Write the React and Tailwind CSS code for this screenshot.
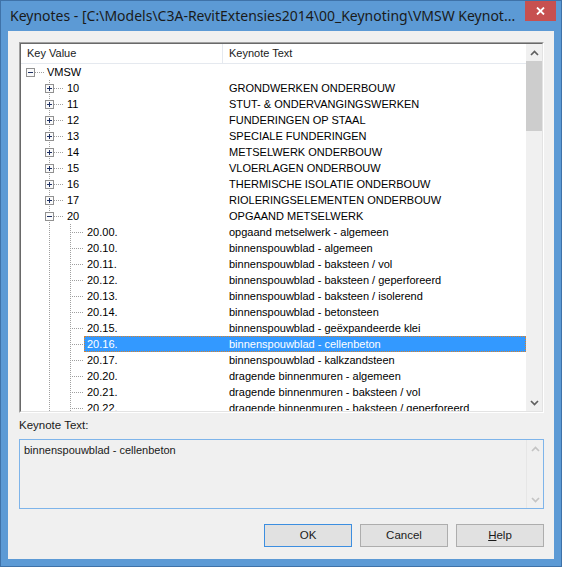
import React from "react";

const rows = [
  { d: 0, k: "VMSW", t: "", box: "minus" },
  { d: 1, k: "10", t: "GRONDWERKEN ONDERBOUW", box: "plus" },
  { d: 1, k: "11", t: "STUT- & ONDERVANGINGSWERKEN", box: "plus" },
  { d: 1, k: "12", t: "FUNDERINGEN OP STAAL", box: "plus" },
  { d: 1, k: "13", t: "SPECIALE FUNDERINGEN", box: "plus" },
  { d: 1, k: "14", t: "METSELWERK ONDERBOUW", box: "plus" },
  { d: 1, k: "15", t: "VLOERLAGEN ONDERBOUW", box: "plus" },
  { d: 1, k: "16", t: "THERMISCHE ISOLATIE ONDERBOUW", box: "plus" },
  { d: 1, k: "17", t: "RIOLERINGSELEMENTEN ONDERBOUW", box: "plus" },
  { d: 1, k: "20", t: "OPGAAND METSELWERK", box: "minus" },
  { d: 2, k: "20.00.", t: "opgaand metselwerk - algemeen" },
  { d: 2, k: "20.10.", t: "binnenspouwblad - algemeen" },
  { d: 2, k: "20.11.", t: "binnenspouwblad - baksteen / vol" },
  { d: 2, k: "20.12.", t: "binnenspouwblad - baksteen / geperforeerd" },
  { d: 2, k: "20.13.", t: "binnenspouwblad - baksteen / isolerend" },
  { d: 2, k: "20.14.", t: "binnenspouwblad - betonsteen" },
  { d: 2, k: "20.15.", t: "binnenspouwblad - geëxpandeerde klei" },
  { d: 2, k: "20.16.", t: "binnenspouwblad - cellenbeton", sel: true },
  { d: 2, k: "20.17.", t: "binnenspouwblad - kalkzandsteen" },
  { d: 2, k: "20.20.", t: "dragende binnenmuren - algemeen" },
  { d: 2, k: "20.21.", t: "dragende binnenmuren - baksteen / vol" },
  { d: 2, k: "20.22.", t: "dragende binnenmuren - baksteen / geperforeerd" },
];

const svgW = { 0: 23, 1: 43, 2: 63 };
const svgCls = { 0: "w-[23px]", 1: "w-[43px]", 2: "w-[63px]" };
const keyCls = { 0: "w-[182px]", 1: "w-[162px]", 2: "w-[142px]" };

const DOT = "#a0a0a0";

function Box({ cx, type }) {
  return (
    <g shapeRendering="crispEdges">
      <rect x={cx - 3.5} y={4.5} width={8} height={8} fill="#fafafa" stroke="#919191" />
      <line x1={cx - 2} y1={8.5} x2={cx + 3} y2={8.5} stroke="#1d2f63" />
      {type === "plus" && <line x1={cx + 0.5} y1={6} x2={cx + 0.5} y2={11} stroke="#1d2f63" />}
    </g>
  );
}

function Lines({ d, box }) {
  const w = svgW[d];
  return (
    <svg width={w} height={16} className={`${svgCls[d]} h-[16px] shrink-0`} shapeRendering="crispEdges">
      {d === 0 && (
        <>
          <line x1={14} y1={8.5} x2={23} y2={8.5} stroke={DOT} strokeDasharray="1 1" />
          <Box cx={8.5} type={box} />
        </>
      )}
      {d === 1 && (
        <>
          <line x1={28.5} y1={0} x2={28.5} y2={16} stroke={DOT} strokeDasharray="1 1" />
          <line x1={33} y1={8.5} x2={43} y2={8.5} stroke={DOT} strokeDasharray="1 1" />
          <Box cx={27.5} type={box} />
        </>
      )}
      {d === 2 && (
        <>
          <line x1={28.5} y1={0} x2={28.5} y2={16} stroke={DOT} strokeDasharray="1 1" />
          <line x1={49.5} y1={0} x2={49.5} y2={16} stroke={DOT} strokeDasharray="1 1" />
          <line x1={51} y1={8.5} x2={63} y2={8.5} stroke={DOT} strokeDasharray="1 1" />
        </>
      )}
    </svg>
  );
}

function Chevron({ up, color = "#5f5f5f" }) {
  return (
    <svg width="9" height="6" viewBox="0 0 9 6">
      {up ? (
        <path d="M1 5 L4.5 1.5 L8 5" fill="none" stroke={color} strokeWidth="1.7" />
      ) : (
        <path d="M1 1 L4.5 4.5 L8 1" fill="none" stroke={color} strokeWidth="1.7" />
      )}
    </svg>
  );
}

function Row({ r }) {
  return (
    <div className="h-[16px] flex shrink-0">
      <Lines d={r.d} box={r.box} />
      <div
        className={
          "flex-1 flex items-center pl-[2px] border border-dotted whitespace-nowrap " +
          (r.sel ? "bg-[#3399ff] text-white border-[#d9822b]" : "border-transparent text-black")
        }
      >
        <span className={`${keyCls[r.d]} shrink-0`}>{r.k}</span>
        <span>{r.t}</span>
      </div>
    </div>
  );
}

export default function App() {
  return (
    <div className="w-[562px] h-[567px] border border-[#3f72a8] bg-[#5c9ad5] flex flex-col font-['Liberation_Sans',Arial,sans-serif] text-[11px] text-black overflow-hidden">
      <div className="h-[30px] flex items-start shrink-0">
        <div className="flex-1 min-w-0 pl-[9px] pt-[5px] text-[14px] leading-[20px] text-[#1a1a1a] whitespace-nowrap overflow-hidden font-['Noto_Sans',sans-serif]">
          {"Keynotes - [C:\\Models\\C3A-RevitExtensies2014\\00_Keynoting\\VMSW Keynot..."}
        </div>
        <div className="w-[31px] h-[20px] bg-[#c75050] flex items-center justify-center mr-[5px] shrink-0">
          <svg width="9" height="8" viewBox="0 0 9 8">
            <path d="M1 0.5 L8 7.5 M8 0.5 L1 7.5" stroke="white" strokeWidth="1.8" />
          </svg>
        </div>
      </div>

      <div className="mx-[7px] h-[528px] bg-[#f0f0f0] flex flex-col pl-[11px] pr-[10px] pt-[11px]">
        {/* list view */}
        <div className="h-[371px] border border-t-[#a0a0a0] border-l-[#a0a0a0] border-r-white border-b-white shrink-0">
          <div className="h-full border border-t-[#696969] border-l-[#696969] border-r-[#e3e3e3] border-b-[#e3e3e3] bg-white flex">
            <div className="flex-1 flex flex-col overflow-hidden">
              <div className="h-[20px] flex border-b border-[#e5e9ef] bg-white shrink-0">
                <div className="w-[202px] border-r border-[#e5e9ef] pl-[6px] flex items-center text-[#1a1a1a]">Key Value</div>
                <div className="flex-1 pl-[6px] flex items-center text-[#1a1a1a]">Keynote Text</div>
              </div>
              <div className="flex-1 overflow-hidden flex flex-col">
                {rows.map((r, i) => (
                  <Row key={i} r={r} />
                ))}
              </div>
            </div>
            <div className="w-[16px] bg-[#f0f0f0] flex flex-col shrink-0">
              <div className="h-[17px] flex items-center justify-center">
                <Chevron up />
              </div>
              <div className="h-[70px] bg-[#cdcdcd]" />
              <div className="flex-1" />
              <div className="h-[17px] flex items-center justify-center">
                <Chevron />
              </div>
            </div>
          </div>
        </div>

        <div className="mt-[4px] h-[16px] leading-[16px] text-[11.5px] text-[#1a1a1a]">Keynote Text:</div>

        <div className="mt-[6px] h-[70px] border border-[#7eb4ea] bg-[#f0f0f0] flex shrink-0">
          <div className="flex-1 pl-[4px] pt-[2px] leading-[16px] text-[#1a1a1a]">binnenspouwblad - cellenbeton</div>
          <div className="w-[17px] border-l border-[#e6e6e6] flex flex-col justify-between">
            <div className="h-[17px] flex items-center justify-center">
              <Chevron up color="#c4c4c4" />
            </div>
            <div className="h-[17px] flex items-center justify-center">
              <Chevron color="#c4c4c4" />
            </div>
          </div>
        </div>

        <div className="mt-[15px] flex justify-end gap-[8px]">
          <div className="w-[88px] h-[23px] border border-[#3c8ee0] bg-[#e1e1e1] flex items-center justify-center text-[11.5px] text-[#1a1a1a]">OK</div>
          <div className="w-[88px] h-[23px] border border-[#adadad] bg-[#e1e1e1] flex items-center justify-center text-[11.5px] text-[#1a1a1a]">Cancel</div>
          <div className="w-[88px] h-[23px] border border-[#adadad] bg-[#e1e1e1] flex items-center justify-center text-[11.5px] text-[#1a1a1a]">
            <span><span className="underline">H</span>elp</span>
          </div>
        </div>
      </div>
    </div>
  );
}
